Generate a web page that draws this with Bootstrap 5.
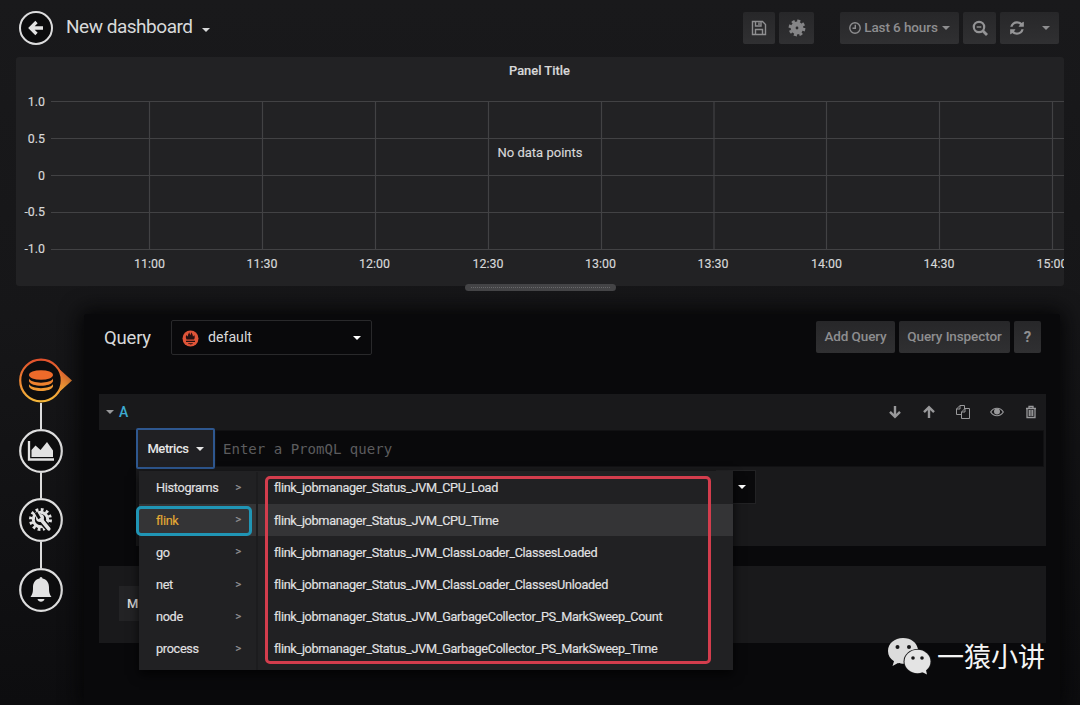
<!DOCTYPE html>
<html lang="en">
<head>
<meta charset="utf-8">
<meta name="viewport" content="width=device-width, initial-scale=1">
<title>New dashboard</title>
<link href="https://cdn.jsdelivr.net/npm/bootstrap@5.3.0/dist/css/bootstrap.min.css" rel="stylesheet">
<style>
body{font-family:Roboto,"Liberation Sans",sans-serif;font-size:13px;line-height:1.2;color:#d8d9da;background:linear-gradient(#19191b,#161618 45%,#0d0d0f);height:705px;overflow:hidden}
svg{display:block;flex:none}
.topbar{height:57px;padding:0 21px 2px 19px}
.dash-title{font-size:19px;letter-spacing:-.48px;margin-left:13px}
.gf-btn{--bs-btn-color:#8e8e90;--bs-btn-bg:#2b2b2d;--bs-btn-border-width:0;--bs-btn-border-radius:2px;--bs-btn-padding-y:0;--bs-btn-padding-x:8px;--bs-btn-font-size:13.5px;--bs-btn-font-weight:500;--bs-btn-line-height:1;height:32px;background:linear-gradient(#272729,#303032);display:inline-flex;align-items:center;justify-content:center;white-space:nowrap;letter-spacing:-.1px}
.tri{width:0;height:0;border:4.500px solid transparent;border-top-color:currentColor;border-bottom:0}
.panel-graph{height:229px;margin:0 16px;background:#222224;border-radius:3px}
.axis text{font-size:12.400px;fill:#d8d8d9;stroke:#d8d8d9;stroke-width:.15px}
.grip{left:465px;top:284px;width:151px;height:7px;border-radius:4px;background:#444446}
.grip::after{content:"";display:block;margin:3px 6px 0;border-top:1px dotted #69696b}
.lower{height:391px;margin-top:28px}
.rail{width:84px;padding-top:44px;padding-left:19px}
.rail-link{width:2px;height:25.500px;margin-left:21px;background:#dcdcdc}
.editor{width:976px;background:#09090b;box-shadow:0 0 20px 4px #050506;padding:0 14px 0 15px;border-radius:3px 3px 0 0}
.editor-head{height:80px;padding:6px 5px 0 5px}
.source{width:201px;height:35px;border:1px solid #29292b;background:#09090b;border-radius:2px;padding:1px 10px 0;margin-left:20px}
.query-head{height:36px;background:#19191b;padding:0 8px 0 7px;color:#98989a}
.query-id{color:#3dabd1;font-weight:500;font-size:14px;margin-left:5px}
.query-body{height:116px;margin-left:37px;background:#19191b;position:relative}
.query-line{height:37px}
.metric-btn{width:79px;height:41px;margin-top:-2px;border:2px solid #2e578f;border-radius:2px;background:#202023;color:#e6e6e6;font-weight:500;font-size:13px;letter-spacing:-.4px}
.promql{flex:1;height:37px;background:#09090b;border:1px solid #111113;margin-right:2px;color:#5c5c5e;font-family:"DejaVu Sans Mono",monospace;font-size:14.050px;padding:2px 0 0 7px}
.format-select{width:40px;height:34px;margin:3px 0 0 580px;border:1px solid #222224;background:#09090b;color:#fff;padding-right:9px}
.cascade{position:absolute;left:3px;top:41px;width:594px;height:199px;padding-top:1px;background:#212123;box-shadow:0 5px 10px rgba(0,0,0,.7);z-index:3;color:#e2e2e3;font-size:12.700px;letter-spacing:-.31px;-webkit-text-stroke:.15px currentColor}
.cascade-row{height:32.150px}
.cascade-first{width:119px;border-right:2px solid #1c1c1e}
.cascade-first .cascade-row{padding:0 15px 0 17px}
.cascade-second .cascade-row{padding-left:16px}
.chosen{background:#343436}
.arrow-r{color:#929294;font-size:11.500px}
.mark-cyan{position:absolute;left:-3px;top:35px;width:116px;height:30px;border:3px solid #2095b5;border-radius:5px}
.mark-red{position:absolute;left:126px;top:5px;width:446px;height:188px;border:3px solid #d33d4d;border-radius:5px}
.options{height:77px;margin-top:20px;background:#19191b;padding:20px}
.option-btn{height:35px;width:90px;background:#232325;padding-left:8px;font-weight:500}
.watermark{position:absolute;left:887px;top:635px;z-index:5;color:#f4f4f4;font:27px/42px "Noto Sans CJK SC",sans-serif}
</style>
</head>
<body class="position-relative">
<header class="topbar d-flex align-items-center">
  <svg width="34" height="34" viewBox="0 0 34 34"><circle cx="17" cy="17" r="16" fill="#0c0c0d" stroke="#dcdcdd" stroke-width="2"/><path d="M24 17H12M17.500 11l-6 6 6 6" fill="none" stroke="#e3e3e3" stroke-width="3.300"/></svg>
  <span class="dash-title">New dashboard</span><span class="tri mt-1" style="margin-left:9px"></span>
  <div class="d-flex ms-auto">
    <button class="btn gf-btn" style="width:32px"><svg width="16" height="16" viewBox="0 0 16 16" fill="none" stroke="#8f8f91" stroke-width="1.400"><path d="M1.500 1.500h10l3 3v10h-13zM4.500 14V9.500h7V14M4.500 2v4h5.500V2M8 2.500v2.500"/></svg></button>
    <button class="btn gf-btn ms-1" style="width:35px"><svg width="18" height="18" viewBox="0 0 18 18" fill="none" stroke="#858587"><circle cx="9" cy="9" r="3.900" stroke-width="5"/><circle cx="9" cy="9" r="7.100" stroke-width="2.600" stroke-dasharray="3.100 2.476"/></svg></button>
    <button class="btn gf-btn" style="width:119px;margin-left:26px"><svg style="margin-right:3px" width="12" height="12" viewBox="0 0 12 12" fill="none" stroke="currentColor" stroke-width="1.400"><circle cx="6" cy="6" r="5.200"/><path d="M6.300 2.800v3.500H3.500"/></svg>Last 6 hours<span class="tri ms-1"></span></button>
    <button class="btn gf-btn ms-1" style="width:33px"><svg width="16" height="16" viewBox="0 0 16 16" fill="none" stroke="#949496"><circle cx="7" cy="7" r="5.200" stroke-width="2.200"/><path d="M4.700 7h4.600" stroke-width="1.400"/><path d="M10.800 10.800l4.200 4.200" stroke-width="2.800"/></svg></button>
    <button class="btn gf-btn ms-1" style="width:59px"><svg width="16" height="16" viewBox="0 0 1792 1792" fill="#949496"><path d="M1639 1056q0 5-1 7-64 268-268 434.500t-478 166.500q-146 0-282.500-55t-243.500-157l-129 129q-19 19-45 19t-45-19-19-45v-448q0-26 19-45t45-19h448q26 0 45 19t19 45-19 45l-137 137q71 66 161 102t187 36q134 0 250-65t186-179q11-17 53-117 8-23 30-23h192q13 0 22.500 9.500t9.500 22.500zm25-800v448q0 26-19 45t-45 19h-448q-26 0-45-19t-19-45 19-45l138-138q-148-137-349-137-134 0-250 65t-186 179q-11 17-53 117-8 23-30 23h-199q-13 0-22.500-9.500t-9.500-22.500v-7q65-268 270-434.500t480-166.500q146 0 284 55.500t245 156.500l130-129q19-19 45-19t45 19 19 45z"/></svg><span class="tri" style="margin-left:17px"></span></button>
  </div>
</header>

<section class="panel-graph">
  <svg class="axis" width="1048" height="229" viewBox="16 57 1048 229">
    <path d="M51 101.500H1064M51 138.500H1064M51 175.500H1064M51 212.500H1064M51 249.500H1064M149.500 101v148M262.500 101v148M375.500 101v148M488.500 101v148M601.500 101v148M714 101v148M826.500 101v148M939.500 101v148M1052.500 101v148" fill="none" stroke="#424244" stroke-width="1.200"/>
    <g text-anchor="end"><text x="45" y="105.500">1.0</text><text x="45" y="142.700">0.5</text><text x="45" y="179.700">0</text><text x="45" y="216">-0.5</text><text x="45" y="253">-1.0</text></g>
    <g text-anchor="middle"><text x="149.500" y="267.500">11:00</text><text x="262" y="267.500">11:30</text><text x="374.500" y="267.500">12:00</text><text x="488" y="267.500">12:30</text><text x="600.500" y="267.500">13:00</text><text x="713" y="267.500">13:30</text><text x="826.500" y="267.500">14:00</text><text x="939" y="267.500">14:30</text><text x="1052" y="267.500">15:00</text>
    <text x="539.500" y="75" style="font-weight:500;font-size:12.900px">Panel Title</text><text x="540" y="156.800" style="font-size:13px">No data points</text></g>
  </svg>
</section>
<div class="grip position-absolute"></div>

<main class="lower d-flex">
  <nav class="rail">
    <svg width="54" height="45" viewBox="0 0 54 45"><defs><linearGradient id="hot" x1="0" y1="0" x2="0" y2="1"><stop offset="0" stop-color="#e2512c"/><stop offset="1" stop-color="#f5b73b"/></linearGradient></defs><path d="M38 9L53 22.500 38 36z" fill="url(#hot)"/><circle cx="22" cy="22.500" r="20.800" fill="#0d0d0e" stroke="url(#hot)" stroke-width="2.200"/><ellipse cx="22" cy="17" rx="12" ry="4.800" fill="#ee6a2a"/><path d="M10 20.500c2 5.500 22 5.500 24 0v2.800c-2 6-22 6-24 0z" fill="#ef832e"/><path d="M10 26c2 5.500 22 5.500 24 0v2.500c-2 6-22 6-24 0z" fill="#f19a34"/></svg>
    <div class="rail-link"></div>
    <svg width="44" height="44" viewBox="0 0 44 44"><circle cx="22" cy="22" r="20.800" fill="#0d0d0e" stroke="#dedede" stroke-width="2.200"/><path d="M10 12v18.500h25" fill="none" stroke="#e2e2e2" stroke-width="2.300"/><path d="M12.500 28V21l4-4.500 5 4.500 6.500-8 6 8.500V28z" fill="#e2e2e2"/></svg>
    <div class="rail-link"></div>
    <svg width="44" height="44" viewBox="0 0 44 44"><circle cx="22" cy="22" r="20.800" fill="#0d0d0e" stroke="#dedede" stroke-width="2.200"/><circle cx="21.500" cy="21.500" r="7.200" fill="none" stroke="#e2e2e2" stroke-width="3"/><circle cx="21.500" cy="21.500" r="9.800" fill="none" stroke="#e2e2e2" stroke-width="3.400" stroke-dasharray="2.700 2.431"/><path d="M22 22l10 11" stroke="#0d0d0e" stroke-width="6.500"/><path d="M22 21.500l7.800 9.300" stroke="#e2e2e2" stroke-width="3.600" stroke-linecap="round"/><circle cx="21" cy="20" r="4" fill="#e2e2e2"/><path d="M20.500 20.500l-3.500-6" stroke="#0d0d0e" stroke-width="2.800"/></svg>
    <div class="rail-link"></div>
    <svg width="44" height="44" viewBox="0 0 44 44"><circle cx="22" cy="22" r="20.800" fill="#0d0d0e" stroke="#dedede" stroke-width="2.200"/><path d="M20.500 10.500a1.500 1.500 0 0 1 3 0c5 1 6.500 5 6.500 9 0 5 .5 6.500 2.500 9.500h-21c2-3 2.500-4.500 2.500-9.500 0-4 1.500-8 6.500-9zM18.500 31h7c-.8 3.500-6.200 3.500-7 0z" fill="#e2e2e2"/></svg>
  </nav>

  <section class="editor">
    <div class="editor-head d-flex align-items-start">
      <span style="font-size:18.500px;line-height:36px;letter-spacing:-.2px">Query</span>
      <div class="source d-flex align-items-center"><svg width="17" height="17" viewBox="0 0 17 17"><circle cx="8.500" cy="8.500" r="8" fill="#df5438"/><path d="M4.500 9.500c-1-2-.8-3.500 0-4.500.4 1 .8 1.300 1.300 1.500 0-2 .8-2.800 1.500-4.300.3 1.500.7 2 1.200 3 .3-1 .6-1.700.5-3 1.300 1.200 1.800 2.600 1.900 4.300.6-.3 1-.8 1.300-1.500.8 1.500.7 3-.2 4.500zM4 10.800h9v1.300H4zM6 13.200h5c-.6 1.600-4.400 1.600-5 0z" fill="#241011"/></svg><span style="font-size:14.200px;margin-left:9px">default</span><span class="tri ms-auto text-white"></span></div>
      <div class="d-flex ms-auto" style="margin-top:1px"><button class="btn gf-btn" style="width:79px">Add Query</button><button class="btn gf-btn ms-1" style="width:111px">Query Inspector</button><button class="btn gf-btn" style="width:27px;margin-left:4px;font-weight:700;font-size:15px">?</button></div>
    </div>
    <div class="query-head d-flex align-items-center"><span class="tri"></span><span class="query-id">A</span>
      <div class="d-flex ms-auto align-items-center" style="gap:20px">
        <svg width="14" height="14" viewBox="0 0 14 14" fill="none" stroke="currentColor" stroke-width="2.400"><path d="M7 1v11M2 6.800l5 5 5-5"/></svg>
        <svg width="14" height="14" viewBox="0 0 14 14" fill="none" stroke="currentColor" stroke-width="2.400"><path d="M7 13V2M2 7.200l5-5 5 5"/></svg>
        <svg width="14" height="14" viewBox="0 0 14 14" fill="none" stroke="currentColor" stroke-width="1"><path d="M5.500 9.500h-5V4L4 .5h4.500V4M4 .5V4H.5M5.500 13.500V7L9 3.500h4.500v10zM9 3.500V7H5.500"/></svg>
        <svg width="14" height="14" viewBox="0 0 14 14"><path d="M.7 7c3-5 9.600-5 12.600 0-3 5-9.600 5-12.600 0z" fill="none" stroke="currentColor" stroke-width="1.200"/><circle cx="7" cy="6.500" r="3" fill="currentColor"/></svg>
        <svg width="14" height="14" viewBox="0 0 14 14" fill="none" stroke="currentColor" stroke-width="1.300"><path d="M2 3.500h10M5 3V1.500h4V3M3 3.500v9h8v-9M5.300 5v6M7 5v6M8.700 5v6"/></svg>
      </div>
    </div>
    <div class="query-body">
      <div class="query-line d-flex"><div class="metric-btn d-flex align-items-center justify-content-center">Metrics<span class="tri" style="margin-left:7px"></span></div><div class="promql d-flex align-items-center">Enter a PromQL query</div></div>
      <div class="format-select d-flex align-items-center justify-content-end"><span class="tri"></span></div>
      <div class="cascade d-flex">
        <div class="cascade-first">
          <div class="cascade-row d-flex align-items-center justify-content-between"><span>Histograms</span><span class="arrow-r">&gt;</span></div>
          <div class="cascade-row chosen d-flex align-items-center justify-content-between"><span style="color:#e5ac34">flink</span><span class="arrow-r">&gt;</span></div>
          <div class="cascade-row d-flex align-items-center justify-content-between"><span>go</span><span class="arrow-r">&gt;</span></div>
          <div class="cascade-row d-flex align-items-center justify-content-between"><span>net</span><span class="arrow-r">&gt;</span></div>
          <div class="cascade-row d-flex align-items-center justify-content-between"><span>node</span><span class="arrow-r">&gt;</span></div>
          <div class="cascade-row d-flex align-items-center justify-content-between"><span>process</span><span class="arrow-r">&gt;</span></div>
        </div>
        <div class="cascade-second flex-fill">
          <div class="cascade-row d-flex align-items-center">flink_jobmanager_Status_JVM_CPU_Load</div>
          <div class="cascade-row chosen d-flex align-items-center">flink_jobmanager_Status_JVM_CPU_Time</div>
          <div class="cascade-row d-flex align-items-center">flink_jobmanager_Status_JVM_ClassLoader_ClassesLoaded</div>
          <div class="cascade-row d-flex align-items-center">flink_jobmanager_Status_JVM_ClassLoader_ClassesUnloaded</div>
          <div class="cascade-row d-flex align-items-center">flink_jobmanager_Status_JVM_GarbageCollector_PS_MarkSweep_Count</div>
          <div class="cascade-row d-flex align-items-center">flink_jobmanager_Status_JVM_GarbageCollector_PS_MarkSweep_Time</div>
        </div>
        <div class="mark-cyan"></div><div class="mark-red"></div>
      </div>
    </div>
    <div class="options"><div class="option-btn d-flex align-items-center">M</div></div>
  </section>
</main>

<div class="watermark d-flex align-items-center">
  <svg width="46" height="40" viewBox="0 0 46 40" style="margin-right:4px"><path d="M16 2C7.500 2 1 7.500 1 15c0 4.500 2.300 8 6 10.300L5.500 30l5.500-3c2 .6 3.500.8 6 .8 0-9 6-14.300 14-14.300C30 6.500 24 2 16 2z" fill="#dcdcdc"/><ellipse cx="30.500" cy="25.500" rx="14" ry="12.500" fill="#171718"/><ellipse cx="30.500" cy="25.500" rx="13" ry="11.700" fill="#e4e4e4"/><path d="M33 35l7 3.500-1.500-6.500z" fill="#e4e4e4"/><g fill="#171718"><circle cx="10.500" cy="11" r="2"/><circle cx="22" cy="11" r="2"/><circle cx="26" cy="22" r="1.800"/><circle cx="35" cy="22" r="1.800"/></g></svg><span>一猿小讲</span>
</div>
<script src="https://cdn.jsdelivr.net/npm/bootstrap@5.3.0/dist/js/bootstrap.bundle.min.js"></script>
</body>
</html>
